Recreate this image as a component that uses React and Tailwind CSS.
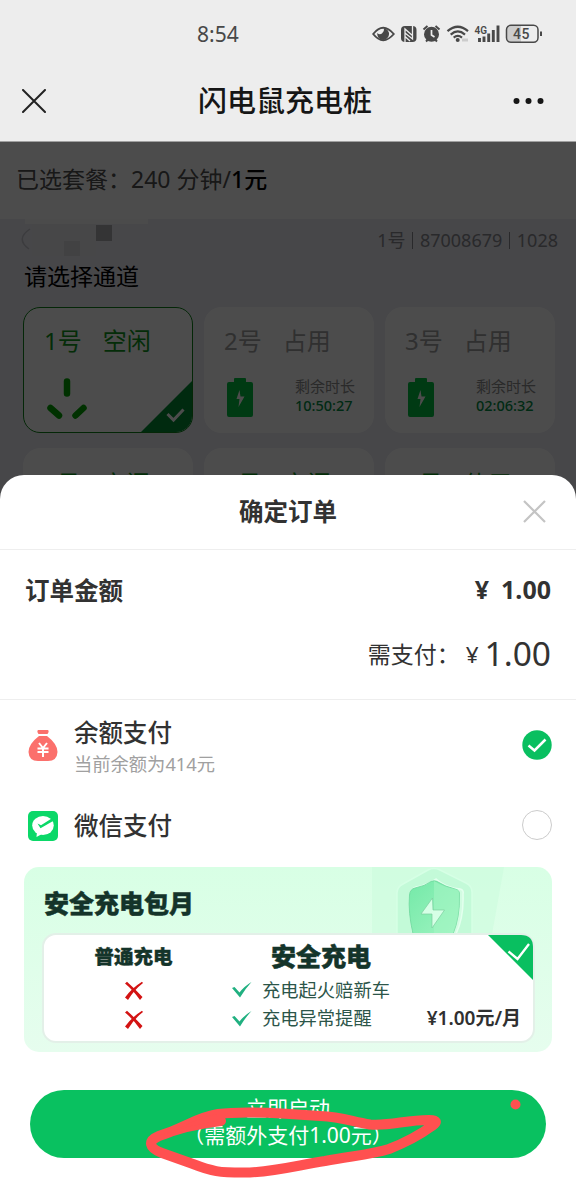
// src/App.jsx

import clsx from 'clsx';

const channels = [
  { id: 1, status: '空闲', state: 'selected' },
  { id: 2, status: '占用', state: 'busy', remaining: '10:50:27' },
  { id: 3, status: '占用', state: 'busy', remaining: '02:06:32' },
  { id: 4, status: '空闲', state: 'free' },
  { id: 5, status: '空闲', state: 'free' },
  { id: 6, status: '使用', state: 'free' },
];

const benefits = ['充电起火赔新车', '充电异常提醒'];

function StatusIcons() {
  return (
    <svg className="block h-6 w-[174px]" viewBox="370 22 174 24" fill="none" stroke="#484848">
      {/* Eye */}
      <path d="M373.2 34Q383 21.5 393.8 34Q383 46.5 373.2 34Z" strokeWidth="1.9" />
      <path d="M384 28.2A5.900 5.900 0 1 1 377.300 33Q379.500 35.200 382 33.500Q384.500 31.500 384 28.200Z" fill="#484848" stroke="none" />
      {/* NFC */}
      <rect x="401" y="26" width="15.500" height="16" rx="4" fill="#484848" stroke="none" />
      <path d="M405 42V29L413 36M412.500 26V39L405 33M405 36.500L410 41" stroke="#ededed" strokeWidth="1.300" />
      {/* Alarm */}
      <circle cx="431.500" cy="34.300" r="7.500" fill="#484848" stroke="none" />
      <path d="M431.500 30V35L434.500 37" stroke="#ededed" strokeWidth="1.700" />
      <path d="M423.500 29.500L427.500 26M439.500 29.500L435.500 26M426 41.500L428 39.500M437 41.500L435 39.500" strokeWidth="2" />
      {/* Wifi */}
      <path d="M447.500 31.200Q457.800 22.300 468 31.200M450.700 34.600Q457.800 28.300 465 34.600M453.700 37.600Q457.800 34.200 462 37.600" strokeWidth="2.200" />
      <circle cx="457.700" cy="40" r="2" fill="#484848" stroke="none" />
      <path d="M462 40H468" stroke="#cccccc" strokeWidth="3" />
      {/* Signal */}
      <text x="474.500" y="33.800" fill="#484848" stroke="none" fontSize="10" fontWeight="600" fontFamily="Roboto, sans-serif">4G</text>
      <path d="M479.500 38V42M484 36.500V42M488.700 33.500V42M493.300 30V42M498 25.500V42" strokeWidth="2.900" />
      {/* Battery */}
      <path d="M511 26H521V42H511Q507 42 507 38V30Q507 26 511 26Z" fill="#cccccc" stroke="none" />
      <rect x="506.500" y="25.300" width="31.500" height="17" rx="4.500" strokeWidth="1.500" />
      <path d="M541 31.500V36" strokeWidth="2" />
      <text x="521.500" y="38.800" textAnchor="middle" fill="#484848" stroke="none" fontSize="14" fontWeight="500" letterSpacing=".6" fontFamily="Roboto, sans-serif">45</text>
    </svg>
  );
}

function Header() {
  return (
    <header className="h-[142px] border-b border-[#a0a0a0] bg-[#ededed]">
      <div className="flex h-[68px] items-center pl-[197px]">
        <span className="w-[173px] text-[21px] leading-6 text-[#484848]">8:54</span>
        <StatusIcons />
      </div>
      <div className="flex h-[66px] items-center pr-8 pl-[22px]">
        <svg className="h-6 w-6" viewBox="0 0 24 24" stroke="#222" strokeWidth="2" strokeLinecap="round">
          <path d="M1 1L23 23M23 1L1 23" />
        </svg>
        <h1 className="ml-[152px] text-[29px] leading-10 font-medium text-[#161616]">闪电鼠充电桩</h1>
        <svg className="ml-auto h-2 w-[31px]" viewBox="0 0 31 8" fill="#161616">
          <circle cx="3.500" cy="4" r="3" />
          <circle cx="15.500" cy="4" r="3" />
          <circle cx="27.500" cy="4" r="3" />
        </svg>
      </div>
    </header>
  );
}

function BatteryIcon() {
  return (
    <svg className="mt-[5px] h-10 w-[26px]" viewBox="0 0 26 40">
      <path d="M8 0H18Q19 0 19 1V4H24Q26 4 26 6V37Q26 39 24 39H2Q0 39 0 37V6Q0 4 2 4H7V1Q7 0 8 0Z" fill="#00c342" />
      <path d="M12.500 12L9.500 21H12.500L11.500 29L17.500 18.500H13.500Z" fill="#fff" />
    </svg>
  );
}

function SocketIcon() {
  return (
    <svg className="h-[42px] w-10" viewBox="0 0 40 42" stroke="#00a500" strokeWidth="6.500" strokeLinecap="round">
      <path d="M20 3.500V15.500M3.500 30L12 37.500M36.500 30L28.500 37.500" />
    </svg>
  );
}

function ChannelCard({ channel }) {
  const { id, status, state, remaining } = channel;
  return (
    <div
      className={clsx(
        'relative h-[126px] overflow-hidden rounded-[17px] border-[1.5px] bg-white',
        state === 'selected' ? 'border-[#10841a] pl-5' : 'border-white pl-[19px]'
      )}
    >
      <div
        className={clsx(
          'flex gap-[21px] text-[24px] leading-9',
          state === 'busy' ? 'text-[#a0a0a0]' : 'text-[#10961c]',
          state === 'free' ? 'pt-[17px]' : 'pt-[15px]'
        )}
      >
        <span>{id}号</span>
        <span>{status}</span>
      </div>
      {state === 'selected' && (
        <>
          <div className="mt-[19px] ml-[3px]"><SocketIcon /></div>
          <svg className="absolute right-0 bottom-0 h-[51px] w-[51px]" viewBox="0 0 51 51">
            <path d="M51 0V51H0Z" fill="#008c34" />
            <path d="M26.500 33L32.500 39L42.500 28.500" fill="none" stroke="#fff" strokeWidth="3" />
          </svg>
        </>
      )}
      {state === 'busy' && (
        <div className="mt-[14px] flex items-center justify-between pr-[18px] pl-[3px]">
          <BatteryIcon />
          <div className="text-[15px] leading-[19px]">
            <div className="text-[#8c8c8c]">剩余时长</div>
            <div className="text-[14.500px] font-medium text-[#008c44]">{remaining}</div>
          </div>
        </div>
      )}
    </div>
  );
}

function ChannelPage() {
  return (
    <main className="relative h-[360px] overflow-hidden bg-[#ededf5]">
      <div className="flex h-[77px] items-center bg-white pb-0.5 pl-4 text-[23px] text-[#505050]">
        <span className="whitespace-pre">已选套餐：240 分钟/<span className="font-medium text-black">1元</span></span>
      </div>
      <div className="flex h-[43px] items-start justify-between pr-[18px] pl-5">
        <svg className="h-10 w-32" viewBox="0 0 128 40">
          <rect x="5" width="125" height="5" fill="#fbfbfb" />
          <path d="M10 10Q-5 20 9 30" fill="none" stroke="#c8c8cf" strokeWidth="1.500" />
          <rect x="12" y="5" width="64" height="32" fill="#ededf2" />
          <rect x="76" y="6" width="16" height="16" fill="#adadb2" />
          <rect x="44" y="22" width="16" height="15" fill="#dcdce1" />
        </svg>
        <span className="mt-[9px] flex items-center gap-[6.500px] text-[18px] leading-6 text-[#8a8a90]">
          <span>1号</span>
          <span className="h-[17px] w-[1.500px] bg-[#8a8a90]" />
          <span>87008679</span>
          <span className="h-[17px] w-[1.500px] bg-[#8a8a90]" />
          <span>1028</span>
        </span>
      </div>
      <h2 className="-mt-px pl-6 text-[23px] leading-[30px] text-black">请选择通道</h2>
      <div className="mt-4 grid grid-cols-3 gap-x-[11px] gap-y-[15px] pr-[21px] pl-[23px]">
        {channels.map((channel) => (
          <ChannelCard key={channel.id} channel={channel} />
        ))}
      </div>
      <div className="absolute inset-0 bg-black/70" />
    </main>
  );
}

function MoneyBagIcon() {
  return (
    <svg className="mb-0.5 h-[31px] w-[30px]" viewBox="0 0 30 31">
      <path d="M10 0H20Q21.500 1.500 19.500 4H10.500Q8.500 1.500 10 0ZM11 6H19Q29.500 14 29.500 22Q29 31 20 31H10Q1 31 .5 22Q.5 14 11 6Z" fill="#fb706c" />
      <path d="M11 13L15 18L19 13M9.500 18.500H20.500M9.500 22H20.500M15 18V27" fill="none" stroke="#fff" strokeWidth="2" />
    </svg>
  );
}

function WechatPayIcon() {
  return (
    <svg className="h-[30px] w-[30px]" viewBox="0 0 30 30">
      <rect width="30" height="30" rx="5" fill="#0bd868" />
      <ellipse cx="15" cy="14.500" rx="10.800" ry="9.500" fill="#fff" />
      <path d="M9 20L8.500 26L14 23Z" fill="#fff" />
      <path d="M9.500 12.500L12.500 17.200L26 9.500L24 7.300L13 14.200Z" fill="#0bd868" />
    </svg>
  );
}

function ShieldArt() {
  return (
    <svg className="absolute top-0 right-0 h-[67px] w-[180px]" viewBox="0 0 180 67">
      <defs>
        <linearGradient id="shield" x1="0" y1="0" x2="1" y2="1">
          <stop offset="0" stopColor="#74e9a8" />
          <stop offset="1" stopColor="#9ff4c1" />
        </linearGradient>
      </defs>
      <path d="M0 0H132L120 67H0Z" fill="#c9fbdc" opacity=".5" />
      <path d="M25 67V26Q25 20 31 17L56 3Q62 0 68 3L94 16Q100 19 100 25V67Z" fill="#c3fad8" stroke="#d6ffe5" strokeWidth="1.500" />
      <path d="M44 20Q55 18 64 12Q74 21 88 22Q92 23 91 27Q92 50 84 67H41Q36 44 39 25Q39 22 44 20Z" fill="#d2fce2" stroke="#e3ffee" strokeWidth="1.500" />
      <path d="M43 21Q53 19 59 14.500Q62 13 65 14.500Q74 20 83 22Q88 23 87.500 28Q88 50 81 67H41Q36 46 37.500 28Q38 22 43 21Z" fill="url(#shield)" stroke="#6bd79a" strokeWidth=".8" />
      <path d="M62 14Q71 20 83 22Q88 23 87.500 28Q88 50 81 67H62Z" fill="#a5f5c4" opacity=".55" />
      <path d="M60.500 31L49 47H60V61L72.500 43H61Z" fill="#d6ffe6" stroke="#7bcf9f" strokeWidth=".7" />
    </svg>
  );
}

function CrossMark() {
  return (
    <svg className="h-5 w-5" viewBox="0 0 20 20" fill="#d31313">
      <path d="M1 2.500L3 .8Q11 8 18.500 16L16 19Q9 9 1 2.500Z" />
      <path d="M18 .8L19 2Q10 9 4 19L1 16.500Q8 7 18 .8Z" />
    </svg>
  );
}

function CheckMark() {
  return (
    <svg className="h-4 w-5" viewBox="0 0 20 16" fill="#20b080">
      <path d="M0 6L2.500 5L7.500 10.500Q12 4.500 19.500 0Q13 7 8 15.500Z" />
    </svg>
  );
}

function MonthlyPackage() {
  return (
    <section className="relative mx-6 h-[185px] overflow-hidden rounded-[15px] bg-linear-to-b from-[#d8ffe5] to-[#e6fdee] px-[18px] pt-5">
      <ShieldArt />
      <h3 className="relative pl-0.5 text-[25px] leading-8 font-black text-[#14342a] [-webkit-text-stroke:0.5px]">安全充电包月</h3>
      <div className="relative mt-3.5 flex h-[110px] w-[493px] rounded-[14px] border-2 border-[#e3f0e8] bg-white">
        <div className="flex w-[179px] flex-col items-center pt-2">
          <h4 className="text-[19.500px] leading-[27px] font-black text-[#14342a] [-webkit-text-stroke:0.4px]">普通充电</h4>
          <div className="mt-[11px] flex flex-col gap-[9px]">
            <CrossMark />
            <CrossMark />
          </div>
        </div>
        <div className="pt-[5px] pl-[9px]">
          <h4 className="pl-[39px] text-[25px] leading-8 font-black text-[#14342a] [-webkit-text-stroke:0.5px]">安全充电</h4>
          <ul className="mt-1">
            {benefits.map((benefit) => (
              <li key={benefit} className="flex h-[28.500px] items-center gap-2.5 text-[18.300px] text-[#2c5549]">
                <CheckMark />
                <span className="pb-0.5">{benefit}</span>
              </li>
            ))}
          </ul>
        </div>
        <div className="flex flex-1 items-end justify-end pr-3 pb-[11px] text-[19px] leading-6 font-semibold whitespace-nowrap text-[#303030]">
          ¥1.00元/月
        </div>
        <svg className="absolute top-0 right-0 h-[45px] w-[45px]" viewBox="0 0 45 45">
          <path d="M0 0H33Q45 0 45 12V45Z" fill="#09bf60" />
          <path d="M20.500 16.500L29.500 24L41 9" fill="none" stroke="#fff" strokeWidth="2.300" />
        </svg>
      </div>
    </section>
  );
}

function OrderSheet() {
  return (
    <div className="absolute inset-x-0 bottom-0 h-[713px] rounded-t-[24px] bg-white text-[#323232]">
      <div className="relative flex h-[75px] items-center justify-center border-b-[1.500px] border-[#eee] pb-px">
        <h2 className="text-[24.500px] leading-8 font-bold">确定订单</h2>
        <svg className="absolute right-[30px] h-[23px] w-[23px]" viewBox="0 0 23 23" stroke="#c4c4c4" strokeWidth="2.200">
          <path d="M1 1L22 22M22 1L1 22" />
        </svg>
      </div>

      <div className="h-[150px] border-b-[1.500px] border-[#eee] px-[25px] pt-[21px]">
        <div className="flex items-center justify-between leading-9 font-bold">
          <span className="pt-px text-[24.500px]">订单金额</span>
          <span className="flex gap-3 pb-0.5 text-[25px]"><span>¥</span><span>1.00</span></span>
        </div>
        <div className="mt-6 flex items-baseline justify-end leading-10">
          <span className="-translate-y-[3px] text-[23px]">需支付：</span>
          <span className="mr-1.5 ml-1.5 -translate-y-[3px] text-[22.500px]">¥</span>
          <span className="text-[33.500px]">1.00</span>
        </div>
      </div>

      {/* Payment methods */}
      <div className="flex h-[93px] items-center pr-6 pl-7">
        <MoneyBagIcon />
        <div className="mt-[3px] ml-4 flex-1">
          <div className="text-[24.500px] leading-8 font-medium">余额支付</div>
          <div className="text-[18.300px] leading-[30px] text-[#a0a0a0]">当前余额为414元</div>
        </div>
        <svg className="mb-[3px] h-[30px] w-[30px]" viewBox="0 0 30 30">
          <circle cx="15" cy="15" r="14.700" fill="#09bf60" />
          <path d="M6.500 15.500L12.500 20.500L23.500 9.500" fill="none" stroke="#fff" strokeWidth="2.500" />
        </svg>
      </div>
      <div className="flex h-[66px] items-center pr-6 pl-7">
        <WechatPayIcon />
        <div className="ml-4 flex-1 text-[24.500px] leading-8 font-medium">微信支付</div>
        <span className="mb-0.5 h-[30px] w-[30px] rounded-full border-[1.500px] border-[#ccc]" />
      </div>

      <div className="mt-2"><MonthlyPackage /></div>

      <button
        type="button"
        className="mx-[30px] mt-[38px] flex h-[68px] w-[516px] flex-col items-center rounded-full bg-[#09c160] pt-[5px] text-[21px] leading-[27px] text-white"
      >
        <span>立即启动</span>
        <span>（需额外支付1.00元）</span>
      </button>
    </div>
  );
}

// Hand-drawn circle round the extra fee
function PenMarkup() {
  return (
    <svg className="pointer-events-none absolute bottom-0 left-0 h-[108px] w-[576px]" viewBox="0 1080 576 108" fill="none" stroke="#ff5050" strokeWidth="10" strokeLinecap="round" strokeLinejoin="round">
      <path d="M221 1121C194 1124 174 1130 159 1136C147 1141 149 1148 162 1153L193 1164C211 1171 218 1173 250 1172.500C278 1171 299 1165 325 1161C350 1156 370 1155 389 1149C407 1142 421 1134 432 1126C438 1122 437 1120 429 1120C405 1120 391 1126 370 1124.500C350 1121 342 1117 320 1116L282 1113.500C255 1112 233 1112 218 1114C197 1117 182 1129 159 1136" />
      <path d="M221 1121C194 1124 174 1130 159 1136C182 1129 197 1117 218 1114L228 1113Z" fill="#ff5050" stroke="none" />
      <circle cx="515.500" cy="1104.500" r="5" fill="#ff5050" stroke="none" />
    </svg>
  );
}

export default function App() {
  return (
    <div className="relative h-[1188px] w-[576px] overflow-hidden bg-white font-['Noto_Sans','Noto_Sans_CJK_SC',sans-serif]">
      <Header />
      <ChannelPage />
      <OrderSheet />
      <PenMarkup />
    </div>
  );
}
